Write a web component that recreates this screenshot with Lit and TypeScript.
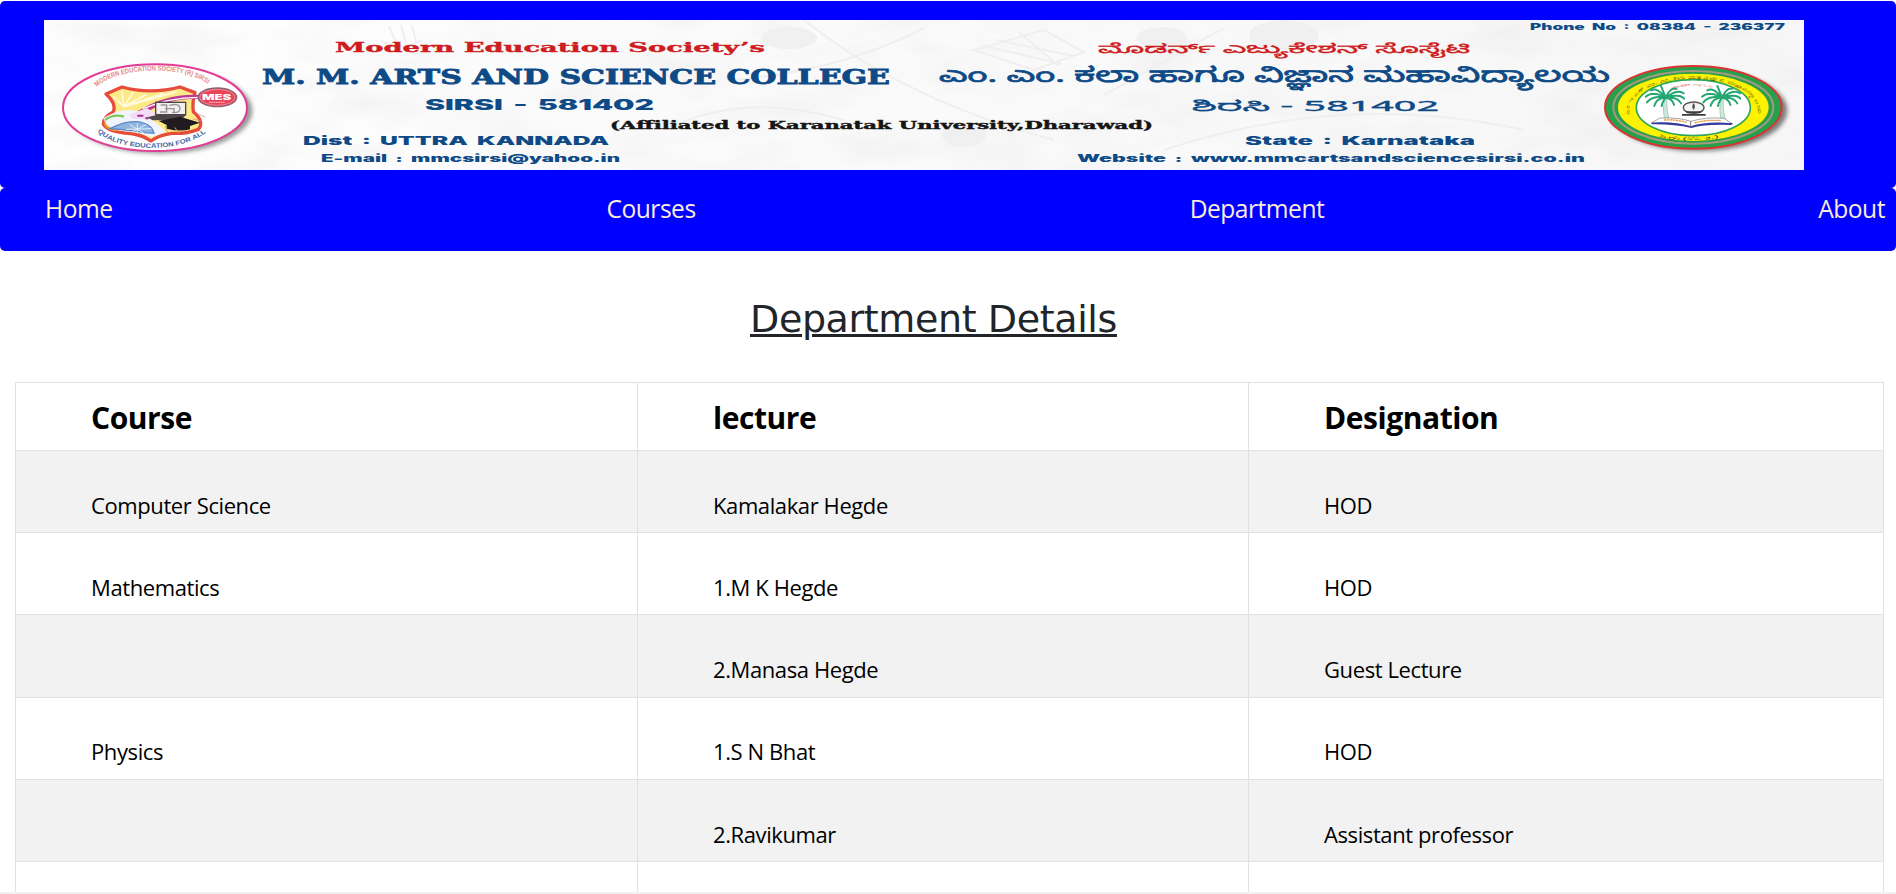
import { LitElement, html, svg, css } from "lit";

type Line = { x: number; y: number; w: number; s: number; c: string; t: string };

const LINES: Line[] = [
  { x: 291, y: 32.4, w: 430, s: 13.6, c: "slab red", t: "Modern Education Society’s" },
  { x: 218, y: 63.6, w: 628, s: 20, c: "slab navy heavy", t: "M. M. ARTS AND SCIENCE COLLEGE" },
  { x: 381, y: 90, w: 229, s: 14, c: "black navy", t: "SIRSI - 581402" },
  { x: 566, y: 108.5, w: 543, s: 11, c: "slab ink", t: "(Affiliated to Karanatak University,Dharawad)" },
  { x: 259, y: 124.8, w: 306, s: 11.4, c: "black navy", t: "Dist : UTTRA KANNADA" },
  { x: 277, y: 142.4, w: 299, s: 10, c: "black navy", t: "E-mail : mmcsirsi@yahoo.in" },
  { x: 1054, y: 32.6, w: 372, s: 13, c: "kan red", t: "ಮೊಡರ್ನ್ ಎಜ್ಯುಕೇಶನ್ ಸೊಸೈಟಿ" },
  { x: 895, y: 62, w: 671, s: 20.5, c: "kan navy bold", t: "ಎಂ. ಎಂ. ಕಲಾ ಹಾಗೂ ವಿಜ್ಞಾನ ಮಹಾವಿದ್ಯಾಲಯ" },
  { x: 1148, y: 90.5, w: 247, s: 14.5, c: "kan navy", t: "ಶಿರಸಿ - 581402" },
  { x: 1201, y: 124.8, w: 230, s: 11.4, c: "black navy", t: "State : Karnataka" },
  { x: 1033, y: 142.4, w: 508, s: 10, c: "black navy", t: "Website : www.mmcartsandsciencesirsi.co.in" },
  { x: 1486, y: 9.8, w: 255, s: 9, c: "black navy", t: "Phone No : 08384 - 236377" },
];

class CollegeBanner extends LitElement {
  static styles = css`
    :host { display: block; width: 1760px; height: 150px; }
    svg { display: block; width: 100%; height: 100%; }
    text { white-space: pre; }
    .slab { font-family: "DejaVu Serif", serif; font-weight: 700; stroke-width: 0.4; }
    .slab.heavy { stroke-width: 0.8; }
    .slab.navy { stroke: #0d4a86; }
    .slab.red { stroke: #cf1c20; }
    .slab.ink { stroke: #151515; }
    .black { font-family: Inter, "Liberation Sans", sans-serif; font-weight: 900; word-spacing: 2px; }
    .kan { font-family: "Noto Sans", "Noto Sans Kannada", sans-serif; stroke-width: 0.35; }
    .kan.navy { stroke: #0d4a86; }
    .kan.red { stroke: #cf1c20; }
    .kan.bold { stroke-width: 0.7; }
    .red { fill: #cf1c20; }
    .navy { fill: #0d4a86; }
    .ink { fill: #151515; }
    .ring { font-family: "Liberation Sans", sans-serif; }
  `;

  private society() {
    return svg`
      <g transform="translate(6 30) scale(.33333)">
        <ellipse cx="330" cy="182" rx="277" ry="129" fill="#777" opacity=".75" filter="url(#soft)"/>
        <ellipse cx="315" cy="173" rx="276" ry="130" fill="#fff" stroke="#e23c94" stroke-width="6"/>
        <path id="mesTop" d="M140 110 C215 45 420 45 484 112" fill="none"/>
        <text class="ring" font-size="21" font-weight="700" fill="#e58a82"><textPath href="#mesTop" textLength="350" lengthAdjust="spacingAndGlyphs">MODERN EDUCATION SOCIETY (R) SIRSI</textPath></text>
        <path id="mesBot" d="M142 246 C215 310 400 310 474 242" fill="none"/>
        <text class="ring" font-size="19" font-weight="700" fill="#3d66a5"><textPath href="#mesBot" textLength="345" lengthAdjust="spacingAndGlyphs">QUALITY EDUCATION FOR ALL</textPath></text>
        <path d="M168 132 L216 111 Q300 134 390 111 L435 128 Q426 160 430 185 Q465 215 445 238 Q410 252 365 250 Q325 256 303 273 Q275 252 225 249 Q170 243 160 222 Q160 200 190 186 Q200 160 168 132Z" fill="#fde985" stroke="#e74b3c" stroke-width="10" stroke-linejoin="round"/>
        <path d="M222 170 L190 140 M222 170 L215 124 M222 170 L250 126 M222 170 L290 133 M222 170 L340 130 M222 170 L380 125" stroke="#fffbe0" stroke-width="5"/>
        <path d="M160 205 Q230 160 290 196 L350 245 L302 262 Q270 246 220 244 Q170 238 160 205Z" fill="#f1f3ff"/>
        <path d="M165 210 Q190 190 222 200" fill="none" stroke="#84c854" stroke-width="7"/>
        <path d="M164 215 Q165 240 205 240" fill="none" stroke="#e59a32" stroke-width="6"/>
        <path d="M180 236 Q225 212 260 215 Q305 220 312 250 L285 248 Q240 240 180 236Z" fill="#90b5df" stroke="#5d87c5" stroke-width="4"/>
        <path d="M228 238 L304 236 M262 220 V246 M240 224 L282 250 M288 224 L245 247" stroke="#e6effb" stroke-width="3"/>
        <path d="M262 184 Q350 128 455 135 L450 146 Q350 144 286 190Z" fill="#bf3993"/>
        <path d="M278 176 Q360 142 445 142" fill="none" stroke="#fff" stroke-width="4"/>
        <path d="M236 194 L290 174 L318 190 L300 208 L248 206Z" fill="#f5dcf6"/>
        <path d="M262 197 H280 M286 205 H296" stroke="#a02b91" stroke-width="6"/>
        <rect x="317" y="157" width="90" height="37" fill="#f1efed" stroke="#4b454b" stroke-width="4"/>
        <path d="M332 165 H350 V186 H330 M358 166 Q390 158 390 176 Q390 190 366 187 M345 176 H372 V188" fill="none" stroke="#99969b" stroke-width="4"/>
        <path d="M292 202 L320 195 H408 L392 211 H308Z" fill="#4d4548"/>
        <path d="M326 213 L390 200 L450 218 L420 228 V238 Q390 246 350 236 V225Z" fill="#1f1b20"/>
        <path d="M346 228 L352 248 M374 232 L386 248" stroke="#d7a94b" stroke-width="3"/>
        <path d="M440 190 L467 202 M428 206 L456 214" stroke="#e277b1" stroke-width="2"/>
        <ellipse cx="502" cy="142" rx="58" ry="28" fill="#ea4458" stroke="#8a6274" stroke-width="4"/>
        <ellipse cx="502" cy="142" rx="53" ry="24" fill="none" stroke="#f8a6ae" stroke-width="2"/>
        <text class="black" x="456" y="150" font-size="24" fill="#fff" textLength="88" lengthAdjust="spacingAndGlyphs">MES</text>
        <path d="M477 157 H525" stroke="#f5b7bd" stroke-width="4" stroke-dasharray="5 2"/>
      </g>`;
  }

  private palm(x: number) {
    return svg`
      <g transform="translate(${x} 0)">
        <path d="M0 145 Q-9 175 0 212 L13 212 Q3 175 6 145Z" fill="#cfe9dc" stroke="#83c1a5" stroke-width="2"/>
        <path d="M2 143 Q-25 110 -43 122 M2 143 Q-35 122 -58 140 M2 143 Q-38 136 -54 157 M2 143 Q-26 144 -32 168 M2 143 Q-10 112 -12 108 M2 143 Q16 112 34 116 M2 143 Q38 116 56 130 M2 143 Q45 130 57 146 M2 143 Q36 140 48 160 M2 143 Q22 146 27 165 M2 143 Q-8 156 -10 168" fill="none" stroke="#25a773" stroke-width="6" stroke-linecap="round" stroke-dasharray="9 2"/>
      </g>`;
  }

  private collegeSeal() {
    return svg`
      <g transform="translate(1546 30) scale(.33333)">
        <ellipse cx="326" cy="181" rx="266" ry="123" fill="#555" opacity=".75" filter="url(#soft)"/>
        <ellipse cx="310" cy="172" rx="265" ry="124" fill="#25a04c" stroke="#dc3432" stroke-width="6"/>
        <ellipse cx="310" cy="172" rx="240" ry="109" fill="#25a04c" stroke="#a59a7f" stroke-width="6"/>
        <ellipse cx="310" cy="172" rx="228" ry="103" fill="#fff200" stroke="#2f9d4c" stroke-width="4"/>
        <ellipse cx="310" cy="173" rx="171" ry="84" fill="#fff" stroke="#2fa65a" stroke-width="5"/>
        <path id="sealTop" d="M118 194 C104 50 516 50 504 196" fill="none"/>
        <text font-size="14" fill="#3f3a12" class="ring"><textPath href="#sealTop" textLength="488" lengthAdjust="spacingAndGlyphs">ಎಂ ಇ ಎಸ್ ಎಂ. ಎಂ. ಕಲಾ ಮತ್ತು ವಿಜ್ಞಾನ ಮಹಾವಿದ್ಯಾಲಯ</textPath></text>
        <path id="sealBot" d="M208 262 Q300 280 392 262" fill="none"/>
        <text font-size="14" fill="#3f3a12" class="ring"><textPath href="#sealBot" textLength="180" lengthAdjust="spacingAndGlyphs">ಶಿರಸಿ (ಉ. ಕ.)</textPath></text>
        <path id="sealMid" d="M246 116 Q310 100 374 114" fill="none"/>
        <text font-size="11" fill="#e03b37" class="ring"><textPath href="#sealMid" textLength="126" lengthAdjust="spacingAndGlyphs">ಸ್ಥಾಪನೆ ೧೯೬೩</textPath></text>
        ${this.palm(225)}${this.palm(394)}
        <ellipse cx="311" cy="173" rx="31" ry="17" fill="#f4f4f4" stroke="#555" stroke-width="4"/>
        <path d="M311 159 Q302 170 311 180 Q319 170 311 159Z" fill="#555"/>
        <path d="M284 184 H338 L330 190 H292Z M276 192 H347 V197 H276Z" fill="#3c3c3c"/>
        <path d="M210 204 Q270 202 302 214 Q350 200 402 205 L428 222 Q350 216 304 230 Q250 216 184 219Z" fill="#fff" stroke="#777" stroke-width="2"/>
        <path d="M184 218 Q250 213 302 229 Q350 213 428 220 L424 225 Q350 221 304 234 Q250 222 186 223Z" fill="#363a9e"/>
        <path d="M302 214 V232" stroke="#777" stroke-width="3"/>
        <path d="M222 210 Q260 208 290 217 M314 219 Q350 208 394 212" fill="none" stroke="#e9943d" stroke-width="4" stroke-dasharray="7 2"/>
      </g>`;
  }

  render() {
    return html`<svg viewBox="0 0 1760 150" role="img" aria-label="College banner">
      <defs>
        <filter id="soft" x="-10%" y="-10%" width="120%" height="130%"><feGaussianBlur stdDeviation="6"/></filter>
        <filter id="paper" x="0" y="0" width="100%" height="100%">
          <feTurbulence type="fractalNoise" baseFrequency=".012 .028" numOctaves="3" seed="8"/>
          <feColorMatrix values="0 0 0 0 .82  0 0 0 0 .82  0 0 0 0 .82  1 0 0 0 -.4"/>
        </filter>
        <linearGradient id="wash"><stop offset="0" stop-color="#fff"/><stop offset=".3" stop-color="#fbfbfb"/><stop offset="1" stop-color="#f7f7f7"/></linearGradient>
      </defs>
      <rect width="1760" height="150" fill="url(#wash)"/>
      <rect width="1760" height="150" filter="url(#paper)"/>
      <g fill="none" stroke="#efefef" stroke-width="2">
        <path d="M690 60 Q800 50 880 8 M760 0 Q860 80 1010 120 M1060 75 L1180 8 M620 110 Q700 70 800 100 M1120 130 Q1300 70 1480 110 M930 30 L1000 10 L1040 32 L990 50Z"/>
        <path d="M940 26 L1018 44 M952 20 L1030 36 M975 12 L1015 46 M345 6 L352 22 M357 5 L362 22 M368 5 L372 22 M340 22 Q356 32 378 20"/>
      </g>
      <g fill="#f0f0f0"><ellipse cx="745" cy="18" rx="28" ry="11"/><ellipse cx="1118" cy="18" rx="25" ry="11"/><ellipse cx="1240" cy="15" rx="35" ry="15"/><ellipse cx="920" cy="115" rx="22" ry="12"/></g>
      ${this.society()}
      ${LINES.map((l) => svg`<text class=${l.c} x=${l.x} y=${l.y} font-size=${l.s} textLength=${l.w} lengthAdjust="spacingAndGlyphs">${l.t}</text>`)}
      ${this.collegeSeal()}
    </svg>`;
  }
}
customElements.define("college-banner", CollegeBanner);

const NAV = ["Home", "Courses", "Department", "About"];
const HEAD = ["Course", "lecture", "Designation"];
const ROWS = [
  ["Computer Science", "Kamalakar Hegde", "HOD"],
  ["Mathematics", "1.M K Hegde", "HOD"],
  ["", "2.Manasa Hegde", "Guest Lecture"],
  ["Physics", "1.S N Bhat", "HOD"],
  ["", "2.Ravikumar", "Assistant professor"],
  ["", "", ""],
];

class AppRoot extends LitElement {
  static styles = css`
    :host {
      display: block; box-sizing: border-box; height: 894px; overflow: hidden;
      padding-top: 1px; background: #fff; border-bottom: 2px solid #f1f1f1;
      font-family: "Open Sans", "Noto Sans", sans-serif; color: #000;
    }
    .brand { box-sizing: border-box; height: 187px; padding: 19px 0 0 44px; background: #00f; border-radius: 5px; }
    nav {
      box-sizing: border-box; height: 63px; padding: 3px 11px 0 45px; background: #00f; border-radius: 5px;
      display: flex; justify-content: space-between;
    }
    nav a { font-size: 24.6px; line-height: 36px; letter-spacing: -0.5px; color: #faebd7; }
    h1 {
      margin: 45px 0 0 750px; font: 400 38px/46px "DejaVu Sans", sans-serif; letter-spacing: -0.38px;
      color: #212529; text-decoration: underline; text-decoration-thickness: 3px; text-underline-offset: 2px;
    }
    h1 span { display: inline-block; }
    .table { margin: 40px 12px 0 15px; border: solid #dee2e6; border-width: 1px 0 0 1px; }
    .row { display: grid; grid-template-columns: 622px 611px 635px; height: 82.2px; }
    .row.head { height: 68px; }
    .row:nth-child(even) { background: #f2f2f2; }
    .cell {
      box-sizing: border-box; border: solid #dee2e6; border-width: 0 1px 1px 0;
      padding: 37.8px 0 0 75px; font-size: 22px; line-height: 33px; letter-spacing: -0.4px; white-space: nowrap;
    }
    .head .cell { padding-top: 12px; font-size: 30px; line-height: 45px; font-weight: 700; letter-spacing: -0.45px; }
  `;

  render() {
    return html`
      <header class="brand"><college-banner></college-banner></header>
      <nav>${NAV.map((n) => html`<a>${n}</a>`)}</nav>
      <h1>Department Details</h1>
      <div class="table">
        <div class="row head">${HEAD.map((h) => html`<div class="cell">${h}</div>`)}</div>
        ${ROWS.map((r) => html`<div class="row">${r.map((c) => html`<div class="cell">${c}</div>`)}</div>`)}
      </div>`;
  }
}
customElements.define("app-root", AppRoot);
